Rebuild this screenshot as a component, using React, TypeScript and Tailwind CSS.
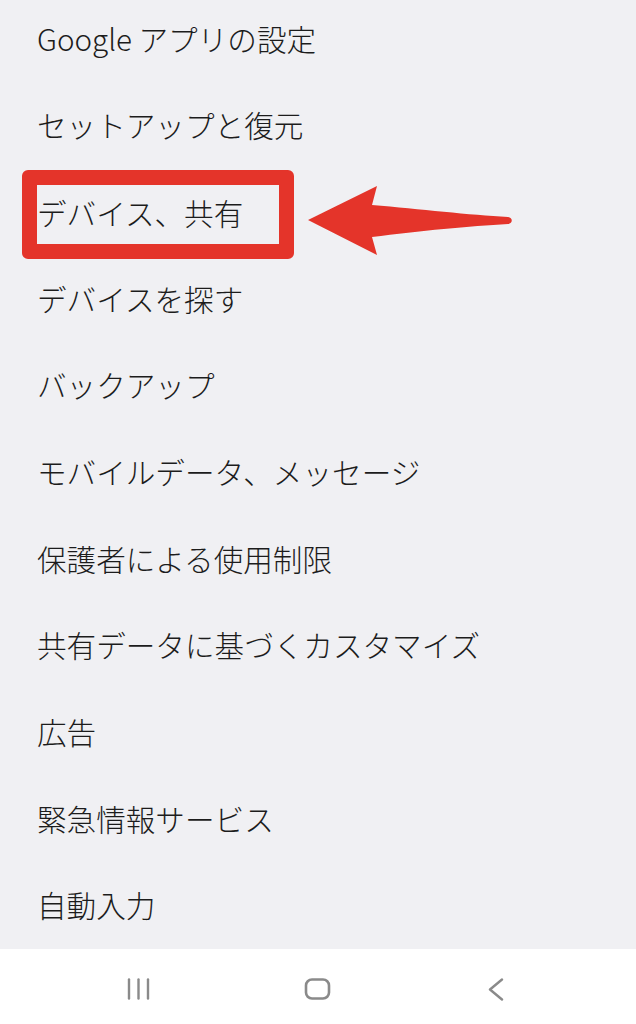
import React from 'react';

const items = [
  'Google アプリの設定',
  'セットアップと復元',
  'デバイス、共有',
  'デバイスを探す',
  'バックアップ',
  'モバイルデータ、メッセージ',
  '保護者による使用制限',
  '共有データに基づくカスタマイズ',
  '広告',
  '緊急情報サービス',
  '自動入力',
];

const Arrow: React.FC = () => (
  <svg
    className="absolute left-[300px] top-[180px]"
    width="220"
    height="80"
    viewBox="300 180 220 80"
  >
    <path
      d="M308 220 L377 186 L372 205 C420 209 470 215 508 217 C513 217.5 513 223.5 508 224 C470 226 420 231 372 237 L377 255 Z"
      fill="#e4342a"
    />
  </svg>
);

const NavBar: React.FC = () => (
  <div className="h-[75px] bg-white flex items-start pt-[29px]">
    <div className="w-full relative h-[22px]">
      <svg className="absolute left-[127px] top-0" width="26" height="22" viewBox="0 0 26 22">
        <g stroke="#8a8a8a" strokeWidth="2.4" strokeLinecap="round">
          <line x1="2" y1="1.5" x2="2" y2="20.5" />
          <line x1="11.5" y1="1.5" x2="11.5" y2="20.5" />
          <line x1="21" y1="1.5" x2="21" y2="20.5" />
        </g>
      </svg>
      <svg className="absolute left-[304px] top-0" width="28" height="22" viewBox="0 0 28 22">
        <rect x="2" y="1.5" width="23" height="19" rx="6" fill="none" stroke="#8a8a8a" strokeWidth="2.6" />
      </svg>
      <svg className="absolute left-[487px] top-0" width="18" height="23" viewBox="0 0 18 23">
        <path d="M15 1.5 L3 11.5 L15 21.5" fill="none" stroke="#8a8a8a" strokeWidth="2.4" strokeLinecap="round" strokeLinejoin="round" />
      </svg>
    </div>
  </div>
);

export default function App() {
  return (
    <div
      className="w-[636px] h-[1024px] bg-[#f0f0f3] flex flex-col overflow-hidden relative"
      style={{ fontFamily: '"Noto Sans CJK JP", "Noto Sans", sans-serif' }}
    >
      <div className="h-[949px] overflow-hidden">
        <div className="-mt-[5px]">
          {items.map((label, i) => (
            <div key={label} className="h-[86.7px] flex items-center">
              {i === 2 ? (
                <div className="relative top-[3px] ml-[22px] w-[272px] h-[89px] shrink-0 border-[15px] border-[#e4342a] rounded-[6px] flex items-center">
                  <span className="relative -top-[2px] text-[29.6px] leading-none font-light text-[#1c1c1c]">{label}</span>
                </div>
              ) : (
                <span className="pl-[37px] text-[29.6px] leading-none font-light text-[#1c1c1c]">{label}</span>
              )}
            </div>
          ))}
        </div>
      </div>
      <NavBar />
      <Arrow />
    </div>
  );
}
